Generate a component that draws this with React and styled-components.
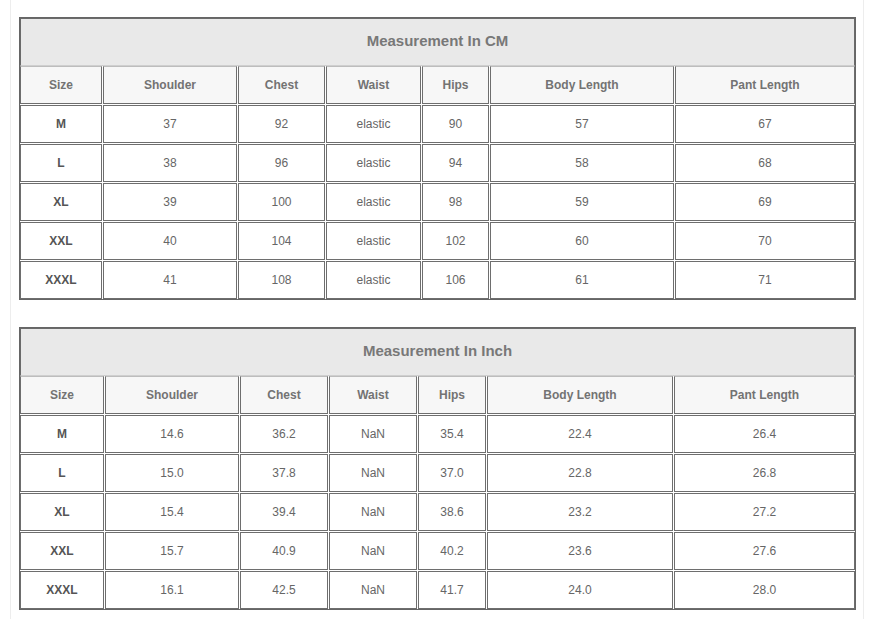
import React from "react";
import styled, { createGlobalStyle } from "styled-components";

const Global = createGlobalStyle`
  html, body { margin: 0; padding: 0; background: #fff; }
  body { font-family: "Liberation Sans", Arial, sans-serif; }
`;

const Frame = styled.div`
  box-sizing: border-box;
  margin-left: 10px;
  width: 854px;
  min-height: 619px;
  border-left: 1px solid #ededed;
  border-right: 1px solid #ededed;
  padding: 17px 0 0 8px;
  display: flex;
  flex-direction: column;
  gap: 27px;
`;

const Table = styled.section`
  width: 837px;
  box-sizing: border-box;
  border: 1px solid #666;
  background: #fff;
  display: flex;
  flex-direction: column;
`;

const Title = styled.div`
  box-sizing: border-box;
  height: 48px;
  padding-bottom: 4px;
  background: #e9e9e9;
  border: 1px solid #6a6a6a;
  border-bottom-color: #cfcfcf;
  display: flex;
  align-items: center;
  justify-content: center;
  font-weight: bold;
  font-size: 15px;
  color: #787878;
`;

const Grid = styled.div`
  display: grid;
  grid-template-columns: ${(p) => p.$cols.map((c) => `${c}px`).join(" ")};
  grid-auto-rows: 38px;
  gap: 1px;
`;

const Cell = styled.div`
  box-sizing: border-box;
  border: 1px solid #6e6e6e;
  ${(p) => p.$head && "border-top-color: #bdbdbd;"}
  background: ${(p) => (p.$head ? "#f7f7f7" : "#fff")};
  display: flex;
  align-items: center;
  justify-content: center;
  font-size: 12px;
  font-weight: ${(p) => (p.$bold ? "bold" : "normal")};
  color: ${(p) => (p.$head ? "#737373" : p.$bold ? "#555" : "#666")};
`;

const headers = ["Size", "Shoulder", "Chest", "Waist", "Hips", "Body Length", "Pant Length"];

const cm = [
  ["M", "37", "92", "elastic", "90", "57", "67"],
  ["L", "38", "96", "elastic", "94", "58", "68"],
  ["XL", "39", "100", "elastic", "98", "59", "69"],
  ["XXL", "40", "104", "elastic", "102", "60", "70"],
  ["XXXL", "41", "108", "elastic", "106", "61", "71"],
];

const inch = [
  ["M", "14.6", "36.2", "NaN", "35.4", "22.4", "26.4"],
  ["L", "15.0", "37.8", "NaN", "37.0", "22.8", "26.8"],
  ["XL", "15.4", "39.4", "NaN", "38.6", "23.2", "27.2"],
  ["XXL", "15.7", "40.9", "NaN", "40.2", "23.6", "27.6"],
  ["XXXL", "16.1", "42.5", "NaN", "41.7", "24.0", "28.0"],
];

function SizeTable({ title, cols, rows }) {
  return (
    <Table>
      <Title>{title}</Title>
      <Grid $cols={cols}>
        {headers.map((h) => (
          <Cell key={h} $head $bold>
            {h}
          </Cell>
        ))}
        {rows.map((r) =>
          r.map((v, i) => (
            <Cell key={r[0] + i} $bold={i === 0}>
              {v}
            </Cell>
          ))
        )}
      </Grid>
    </Table>
  );
}

export default function App() {
  return (
    <>
      <Global />
      <Frame>
        <SizeTable title="Measurement In CM" cols={[82, 134, 87, 95, 67, 184, 180]} rows={cm} />
        <SizeTable title="Measurement In Inch" cols={[84, 134, 88, 88, 68, 186, 181]} rows={inch} />
      </Frame>
    </>
  );
}
